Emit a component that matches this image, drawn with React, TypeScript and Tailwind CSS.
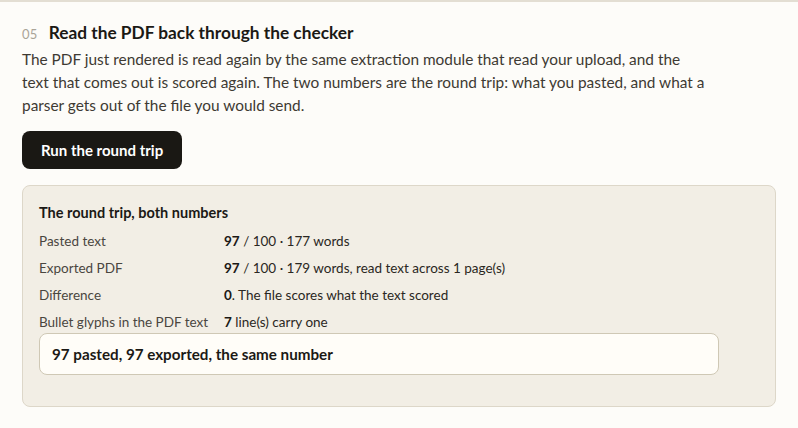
import React from 'react';

const ROWS = [
  { label: 'Pasted text', strong: '97', rest: ' / 100 · 177 words' },
  { label: 'Exported PDF', strong: '97', rest: ' / 100 · 179 words, read text across 1 page(s)' },
  { label: 'Difference', strong: '0', rest: '. The file scores what the text scored' },
  { label: 'Bullet glyphs in the PDF text', strong: '7', rest: ' line(s) carry one' },
];

export default function App() {
  return (
    <div
      className="min-h-[428px] bg-[#fdfcf9] border-t-2 border-[#e3ded3] text-[#1b1915]"
      style={{ fontFamily: 'Lato, "Open Sans", sans-serif' }}
    >
      <div className="px-[22px] pt-[18px]">
        <div className="flex items-baseline gap-[11px]">
          <span className="text-[13px] text-[#aaa498] tracking-wide">05</span>
          <h2 className="text-[17.3px] font-bold text-[#1b1915]">Read the PDF back through the checker</h2>
        </div>
        <p className="mt-[2px] max-w-[700px] text-[15.4px] leading-[23px] text-[#3e3a33]">
          The PDF just rendered is read again by the same extraction module that read your upload, and the
          <br />
          text that comes out is scored again. The two numbers are the round trip: what you pasted, and what a
          <br />
          parser gets out of the file you would send.
        </p>

        <button className="mt-[14px] h-[38px] px-[19px] rounded-[8px] bg-[#1a1814] text-white text-[15px] font-bold">
          Run the round trip
        </button>

        <div className="mt-[16px] rounded-[8px] border border-[#ddd7c9] bg-[#f2eee5] px-[16px] pt-[16px] pb-[31px]">
          <div className="text-[14.5px] font-bold text-[#1b1915]">The round trip, both numbers</div>
          <div className="mt-[4px] flex flex-col">
            {ROWS.map((r) => (
              <div key={r.label} className="flex h-[27px] items-center text-[13.5px] text-[#2a2722]">
                <span className="w-[185px] shrink-0 text-[#4a463f]">{r.label}</span>
                <span>
                  <b className="font-bold text-[#1b1915]">{r.strong}</b>
                  {r.rest}
                </span>
              </div>
            ))}
          </div>
          <div className="-mt-[3px] max-w-[680px] rounded-[8px] border border-[#cfc8b5] bg-[#fffdf8] px-[12px] py-[9px] text-[15.2px] font-bold text-[#1b1915]">
            97 pasted, 97 exported, the same number
          </div>
        </div>
      </div>
    </div>
  );
}
